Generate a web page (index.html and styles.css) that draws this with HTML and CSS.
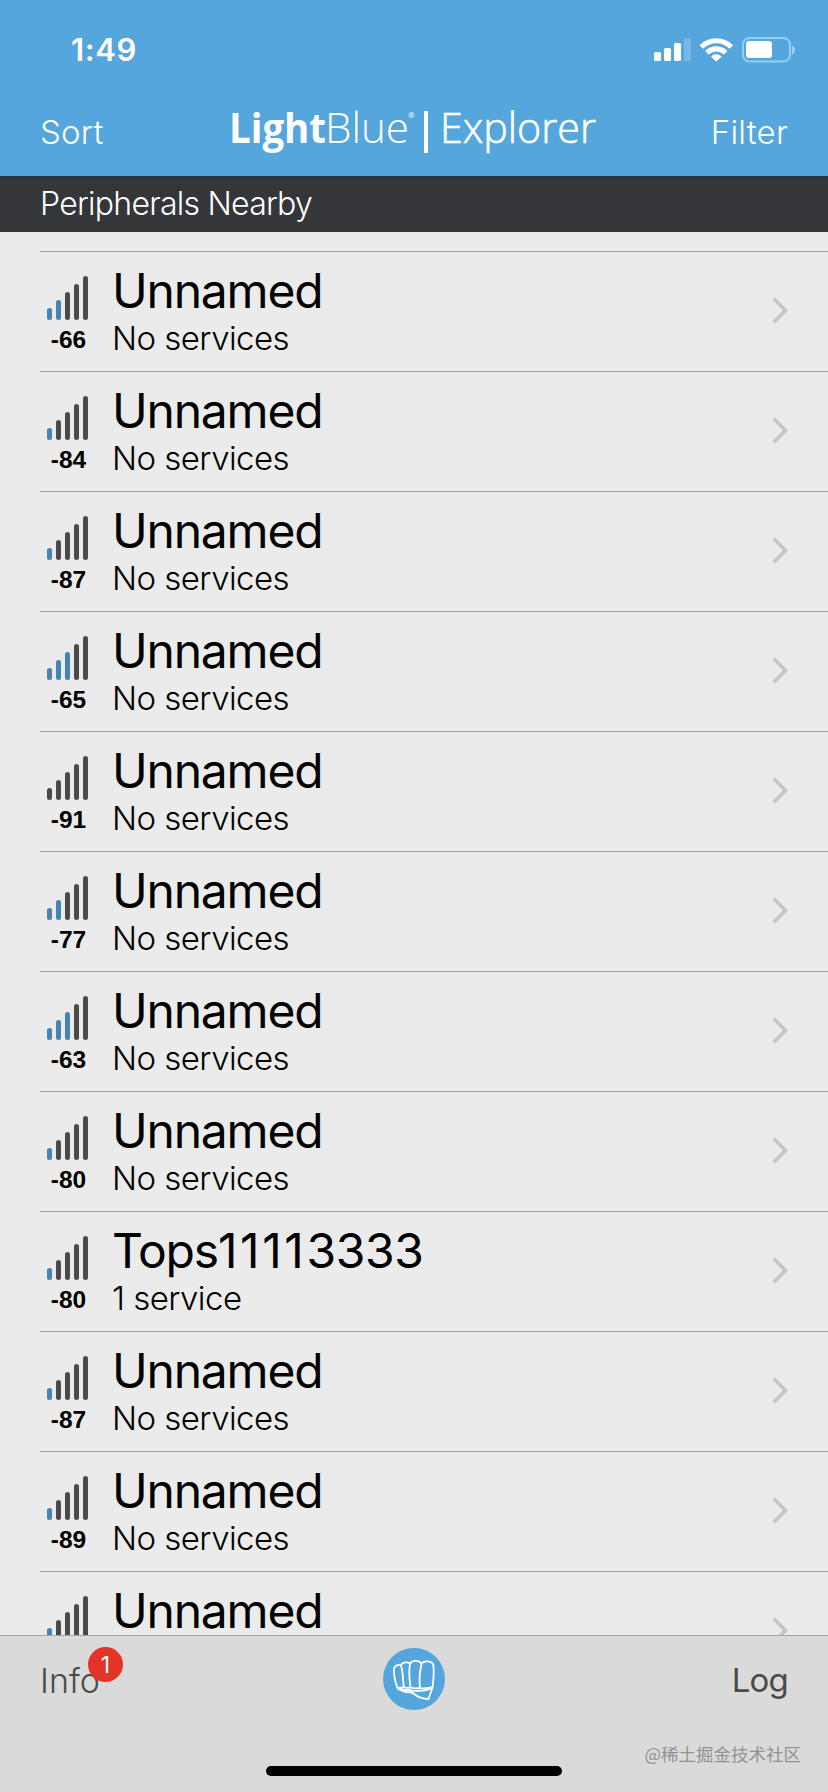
FILE: index.html
```html
<!DOCTYPE html>
<html lang="en">
<head>
<meta charset="utf-8">
<title>LightBlue Explorer</title>
<link rel="stylesheet" href="styles.css">
</head>
<body>
<svg class="defs" width="0" height="0" aria-hidden="true">
  <symbol id="chevron" viewBox="0 0 16 27"><path d="M1.8 1.8 13.4 13.5 1.8 25.2" fill="none" stroke="#c5c5c7" stroke-width="3.6"/></symbol>
</svg>
<div class="screen">
  <header class="header">
    <div class="status">
      <span class="time">1:49</span>
      <svg class="status-icons" width="144" height="28" viewBox="0 0 144 28">
        <g fill="#fff">
          <rect x="1" y="15" width="7" height="9" rx="1.5"/>
          <rect x="11" y="11" width="7" height="13" rx="1.5"/>
          <rect x="21" y="6" width="7" height="18" rx="1.5"/>
          <rect x="31" y="1" width="7" height="23" rx="1.5" opacity=".2"/>
          <path d="M46.5 8.2a24 24 0 0 1 33.6 0l-3.5 3.6a19 19 0 0 0-26.6 0zM52.1 13.9a16 16 0 0 1 22.4 0l-3.6 3.6a11 11 0 0 0-15.2 0zM57.9 19.4a8 8 0 0 1 10.8 0l-5.4 5.1z"/>
          <rect x="93" y="4" width="26" height="17" rx="3"/>
          <path d="M139 8.5c4 1.5 4 7.500 0 9z" opacity=".45"/>
        </g>
        <rect x="90" y="1" width="47" height="23.500" rx="6.500" fill="none" stroke="#8fd0fb" stroke-width="2"/>
      </svg>
    </div>
    <nav class="nav">
      <span class="nav-item sort">Sort</span>
      <svg class="logo" width="370" height="56" viewBox="0 0 370 56" fill="#fff">
        <text class="logo-bold" x="0" y="38" textLength="97" lengthAdjust="spacingAndGlyphs">Light</text>
        <text class="logo-light" x="96" y="38" textLength="84" lengthAdjust="spacingAndGlyphs">Blue</text>
        <text class="logo-mark" x="179" y="13">®</text>
        <rect x="195" y="6" width="4" height="42"/>
        <text class="logo-light logo-product" x="211" y="38" textLength="156" lengthAdjust="spacingAndGlyphs">Explorer</text>
      </svg>
      <span class="nav-item filter">Filter</span>
    </nav>
  </header>
  <h2 class="section">Peripherals Nearby</h2>
  <main class="list">
    <div class="row"><div class="signal s2"><div class="bars"><i></i><i></i><i></i><i></i><i></i></div><b>-66</b></div><div class="info"><div class="name">Unnamed</div><div class="services">No services</div></div><svg class="chev"><use href="#chevron"/></svg></div>
    <div class="row"><div class="signal s1"><div class="bars"><i></i><i></i><i></i><i></i><i></i></div><b>-84</b></div><div class="info"><div class="name">Unnamed</div><div class="services">No services</div></div><svg class="chev"><use href="#chevron"/></svg></div>
    <div class="row"><div class="signal s1"><div class="bars"><i></i><i></i><i></i><i></i><i></i></div><b>-87</b></div><div class="info"><div class="name">Unnamed</div><div class="services">No services</div></div><svg class="chev"><use href="#chevron"/></svg></div>
    <div class="row"><div class="signal s3"><div class="bars"><i></i><i></i><i></i><i></i><i></i></div><b>-65</b></div><div class="info"><div class="name">Unnamed</div><div class="services">No services</div></div><svg class="chev"><use href="#chevron"/></svg></div>
    <div class="row"><div class="signal"><div class="bars"><i></i><i></i><i></i><i></i><i></i></div><b>-91</b></div><div class="info"><div class="name">Unnamed</div><div class="services">No services</div></div><svg class="chev"><use href="#chevron"/></svg></div>
    <div class="row"><div class="signal s2"><div class="bars"><i></i><i></i><i></i><i></i><i></i></div><b>-77</b></div><div class="info"><div class="name">Unnamed</div><div class="services">No services</div></div><svg class="chev"><use href="#chevron"/></svg></div>
    <div class="row"><div class="signal s3"><div class="bars"><i></i><i></i><i></i><i></i><i></i></div><b>-63</b></div><div class="info"><div class="name">Unnamed</div><div class="services">No services</div></div><svg class="chev"><use href="#chevron"/></svg></div>
    <div class="row"><div class="signal s1"><div class="bars"><i></i><i></i><i></i><i></i><i></i></div><b>-80</b></div><div class="info"><div class="name">Unnamed</div><div class="services">No services</div></div><svg class="chev"><use href="#chevron"/></svg></div>
    <div class="row"><div class="signal s1"><div class="bars"><i></i><i></i><i></i><i></i><i></i></div><b>-80</b></div><div class="info"><div class="name">Tops<span class="ones">1111</span><span class="threes">3333</span></div><div class="services">1 service</div></div><svg class="chev"><use href="#chevron"/></svg></div>
    <div class="row"><div class="signal s1"><div class="bars"><i></i><i></i><i></i><i></i><i></i></div><b>-87</b></div><div class="info"><div class="name">Unnamed</div><div class="services">No services</div></div><svg class="chev"><use href="#chevron"/></svg></div>
    <div class="row"><div class="signal s1"><div class="bars"><i></i><i></i><i></i><i></i><i></i></div><b>-89</b></div><div class="info"><div class="name">Unnamed</div><div class="services">No services</div></div><svg class="chev"><use href="#chevron"/></svg></div>
    <div class="row"><div class="signal s1"><div class="bars"><i></i><i></i><i></i><i></i><i></i></div></div><div class="info"><div class="name">Unnamed</div></div><svg class="chev"><use href="#chevron"/></svg></div>
  </main>
  <footer class="footer">
    <div class="tabs">
      <div class="tab tab-info">Info<span class="badge">1</span></div>
      <svg class="fist" width="62" height="62" viewBox="0 0 62 62">
        <circle cx="31" cy="31" r="31" fill="#54a6dd"/>
        <g fill="none" stroke="#fff" stroke-width="1.8" stroke-linejoin="round" stroke-linecap="round">
          <path d="M14.500 39.500C12 34 11 27 10.800 21.500c.2-3 3-5 7.200-4.500 1.500-3 6-3.500 9-1.500 2-3.500 9-3.500 11.500 0 2.500-3 10.500-3 11.800 1.500 1 7 .2 15-.8 22.500L45.500 51c-4.500 0-11-2-15-5.500-2-1.500-4-1.500-6-1.500-4 0-7-1.500-10-4.500z"/>
          <path d="M18 18c2.500 6 1.500 15 3 21M27 16c-1.500 7-.5 16 .5 23.500M38.500 16c-2 8-2.500 15-1.500 24M14.500 39.500c2 1 4 0 6-.5 2 1 5 1 7 .5 3 1 6 1 9 .5 4 1 9 0 12.500-.5"/>
          <path d="M26 42c3 1 9 1 14 .5 4-.5 7-1 9-3M26 42c1 1.500 3 3 5 3.500"/>
          <path d="M15.500 40.500c4 2 8 2 12 2" stroke-width="2.600"/>
        </g>
      </svg>
      <div class="tab tab-log">Log</div>
    </div>
    <div class="watermark">@稀土掘金技术社区</div>
    <div class="home"></div>
  </footer>
</div>
</body>
</html>
```
FILE: styles.css
```css
* { box-sizing: border-box; }
body { margin: 0; font-family: Inter, "Liberation Sans", sans-serif; background: #ebebeb; }
.defs { position: absolute; }
.screen { width: 828px; height: 1792px; display: flex; flex-direction: column; overflow: hidden; }

.header { height: 176px; flex: none; background: #54a6dd; color: #fff; }
.status { height: 96px; padding: 36px 31px 0 71px; display: flex; justify-content: space-between; align-items: flex-start; }
.time { font-size: 31px; line-height: 28px; font-weight: 600; letter-spacing: 0.6px; }
.status-icons { display: block; margin-top: 1px; }
.nav { height: 80px; padding: 9px 40px 0; display: flex; justify-content: space-between; align-items: flex-start; }
.nav-item { width: 150px; margin-top: 7px; font-size: 33px; line-height: 40px; font-weight: 300; letter-spacing: 0.2px; white-space: nowrap; }
.filter { text-align: right; }
.logo { display: block; overflow: visible; }
.logo-bold { font: 700 42px "Open Sans", sans-serif; }
.logo-light { font: 300 42px "Open Sans", sans-serif; }
.logo-product { stroke: #fff; stroke-width: 0.6px; }
.logo-mark { font: 400 8px "Open Sans", sans-serif; }

.section { height: 56px; flex: none; margin: 0; padding: 7px 40px; border-top: 1px solid #1d3444; background: #353639; color: #fff; font-size: 32px; line-height: 39px; font-weight: 300; letter-spacing: -0.75px; }

.list { flex: 1; min-height: 0; overflow: hidden; padding: 19px 0 0 40px; background: #ebebeb; }
.row { height: 120px; border-top: 1px solid #a0a1a2; padding-right: 40px; display: flex; align-items: flex-start; }
.signal { width: 72px; padding: 24px 0 0 7px; }
.bars { height: 44px; display: flex; align-items: flex-end; gap: 4px; }
.bars i { width: 5px; border-radius: 2.500px; background: #4a4a4b; }
.bars i:nth-child(1) { height: 12px; }
.bars i:nth-child(2) { height: 20px; }
.bars i:nth-child(3) { height: 28px; }
.bars i:nth-child(4) { height: 36px; }
.bars i:nth-child(5) { height: 44px; }
.s1 i:nth-child(-n+1), .s2 i:nth-child(-n+2), .s3 i:nth-child(-n+3) { background: #4584ae; }
.signal b { display: block; width: 43px; padding-top: 7px; text-align: center; font: 700 24.500px/26px "Liberation Sans", sans-serif; }
.info { flex: 1; color: #000; }
.name { padding-top: 10px; font-size: 48px; line-height: 58px; letter-spacing: -1.2px; white-space: nowrap; }
.ones { letter-spacing: 2.600px; }
.threes { letter-spacing: -0.4px; }
.services { margin-top: -1px; font-size: 33px; line-height: 38px; font-weight: 300; letter-spacing: -0.55px; white-space: nowrap; }
.chev { width: 16px; height: 27px; margin-top: 45px; }

.footer { position: relative; height: 157px; flex: none; border-top: 1px solid #a5a5a5; background: #dadada; }
.tabs { padding: 12px 40px 0; display: flex; justify-content: space-between; align-items: flex-start; }
.tab { width: 150px; position: relative; padding-top: 12px; font-size: 34px; line-height: 42px; color: #4a4a4a; font-weight: 300; }
.tab-log { padding-top: 11px; text-align: right; font-size: 33px; font-weight: 400; letter-spacing: -0.8px; }
.badge { position: absolute; left: 48px; top: -1px; width: 35px; height: 35px; border-radius: 50%; background: #e43428; color: #fff; font-size: 23px; font-weight: 400; line-height: 36px; text-align: center; }
.fist { display: block; }
.watermark { position: absolute; right: 27px; bottom: 25px; color: #929292; font: 17.500px/26px "Noto Sans CJK SC", sans-serif; }
.home { position: absolute; left: 266px; bottom: 16px; width: 296px; height: 10px; border-radius: 5px; background: #000; }
```
